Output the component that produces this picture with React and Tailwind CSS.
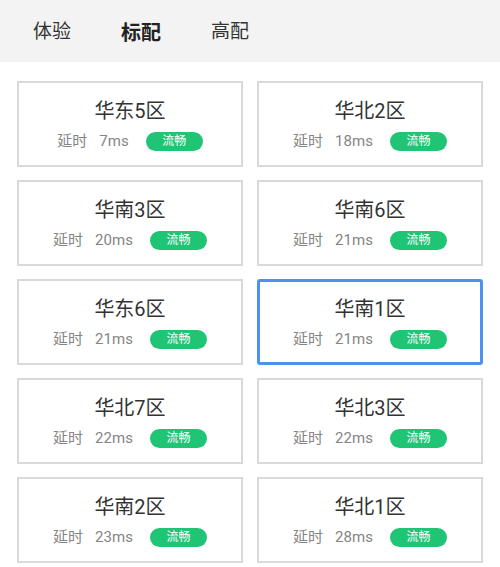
import React from 'react'

const servers = [
  { name: '华东5区', ms: 7 },
  { name: '华北2区', ms: 18 },
  { name: '华南3区', ms: 20 },
  { name: '华南6区', ms: 21 },
  { name: '华东6区', ms: 21 },
  { name: '华南1区', ms: 21, active: true },
  { name: '华北7区', ms: 22 },
  { name: '华北3区', ms: 22 },
  { name: '华南2区', ms: 23 },
  { name: '华北1区', ms: 28 },
]

const tabs = ['体验', '标配', '高配']

function ServerCard({ name, ms, active }) {
  return (
    <div
      className={
        'h-[86px] flex flex-col items-center justify-center bg-white ' +
        (active ? 'border-[3px] border-[#4b92f2] rounded-[3px]' : 'border-2 border-[#d9d9d9]')
      }
    >
      <div className="text-[20px] leading-[24px] text-[#333] mt-[2px]">{name}</div>
      <div className="flex items-center mt-[9px] text-[15px] leading-[19px] text-[#858585]">
        <span>延时</span>
        <span className="ml-[12px]">{ms}ms</span>
        <span className="ml-[17px] w-[57px] h-[19px] rounded-full bg-[#1fc475] text-white text-[12px] leading-[19px] text-center">
          流畅
        </span>
      </div>
    </div>
  )
}

export default function App() {
  return (
    <div className="w-[500px] h-[567px] bg-white overflow-hidden font-['Roboto','Noto_Sans_CJK_SC',sans-serif]">
      <div className="h-[62px] bg-[#f3f3f3] flex items-center pl-[33px] pt-[3px] gap-[50px] text-[19px] text-[#333]">
        {tabs.map((t, i) => (
          <span key={t} className={i === 1 ? 'font-bold text-[20px] text-[#222]' : ''}>
            {t}
          </span>
        ))}
      </div>
      <div className="grid grid-cols-2 gap-x-[14px] gap-y-[13px] px-[17px] pt-[19px]">
        {servers.map((s) => (
          <ServerCard key={s.name} {...s} />
        ))}
      </div>
    </div>
  )
}
